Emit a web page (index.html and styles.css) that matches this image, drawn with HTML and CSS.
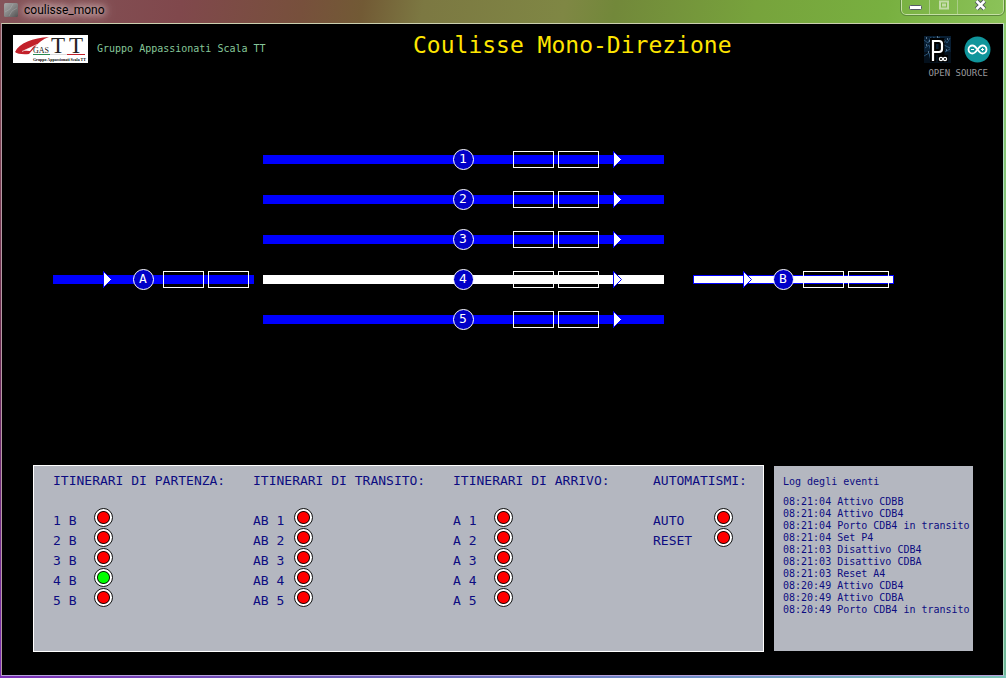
FILE: index.html
```
<!DOCTYPE html>
<html lang="it">
<head>
<meta charset="utf-8">
<title>coulisse_mono</title>
<link rel="stylesheet" href="styles.css">
</head>
<body>
<div class="window">
  <div class="titlebar">
    <svg class="app-icon" viewBox="0 0 14 14" aria-hidden="true">
      <defs><linearGradient id="cube" x1="0" y1="0" x2="1" y2="1"><stop offset="0" stop-color="#a8a8a8"/><stop offset=".5" stop-color="#858585"/><stop offset="1" stop-color="#505050"/></linearGradient></defs>
      <rect width="14" height="14" rx="1.5" fill="url(#cube)"/>
      <path d="M1 9l5-3 3-5M5 13l3-5 5-3" stroke="#bbb" stroke-opacity=".35" fill="none"/>
    </svg>
    <span class="window-name">coulisse_mono</span>
    <div class="window-buttons">
      <button class="win-btn" type="button" aria-label="Riduci">
        <svg width="13" height="14" viewBox="0 0 13 14"><rect x="0.500" y="5.500" width="12" height="4" rx="1" fill="#fff" stroke="#555a66"/></svg>
      </button>
      <button class="win-btn" type="button" aria-label="Ingrandisci" disabled>
        <svg width="12" height="14" viewBox="0 0 12 14"><path d="M2 1.500h8v7h-8zM5 4.500h2v1h-2z" fill="none" stroke="#c3dba8" stroke-width="2"/></svg>
      </button>
      <button class="win-btn win-close" type="button" aria-label="Chiudi">
        <svg width="13" height="14" viewBox="0 0 13 14"><path d="M2.500 1L10.500 9M10.500 1L2.500 9" stroke="#4d525e" stroke-width="4.500"/><path d="M2.500 1L10.500 9M10.500 1L2.500 9" stroke="#fff" stroke-width="2.500"/></svg>
      </button>
    </div>
  </div>

  <main class="app">
    <header class="header">
      <div class="brand">
        <svg class="gas-logo" viewBox="0 0 75 28" role="img" aria-label="GAS TT">
          <rect width="75" height="28" fill="#fff"/>
          <path d="M2 17C6 8 20 3 36 2C30 4 25 8 22 12L16 19C10 19.500 4 19 2 17Z" fill="#c2202a"/>
          <path d="M11 15.500L21 11L17 16Z" fill="#fff"/>
          <path d="M9 16.500L24 9.500" stroke="#fff" stroke-width="0.700"/>
          <rect x="20" y="19" width="17" height="1" fill="#2a8a50"/>
          <rect x="37" y="19" width="17" height="1" fill="#ddd"/>
          <rect x="54" y="19" width="18" height="1" fill="#c2202a"/>
          <text class="logo-gas" x="20" y="18">GAS</text>
          <text class="logo-tt" x="38 56" y="18">TT</text>
          <text class="logo-sub" x="20" y="26">Gruppo Appassionati Scala TT</text>
        </svg>
        <span class="brand-name">Gruppo Appassionati Scala TT</span>
      </div>
      <h1 class="title">Coulisse Mono-Direzione</h1>
      <div class="credits">
        <div class="credit-logos">
          <svg width="27" height="27" viewBox="0 0 27 27" role="img" aria-label="Processing">
            <rect width="27" height="27" fill="#04101c"/>
            <rect width="27" height="16" fill="#081e33"/>
            <path d="M0 4l4 3 3-6M1 12l4-3 2 6M0 20l5-3 2 8M20 3l3 4 3-5M20 9l6 3M21 16l5-3M9 1l3 2 4-2" stroke="#2a5274" fill="none"/>
            <path d="M2 2h1M5 5h1M23 3h1M20 6h1M2 9h1M4 16h1M22 14h1M13 1h1" stroke="#a7c4dd"/>
            <path d="M9 26V5H17.500V16H10" stroke="#000" stroke-width="6" fill="none"/>
            <path d="M9 25V5H15Q18 5 18 8V13Q18 16 15 16H10" stroke="#fff" stroke-width="2.200" fill="none"/>
            <rect x="14" y="19" width="10" height="7" fill="#000"/>
            <circle cx="17" cy="23" r="1.600" stroke="#fff" stroke-width="1.200" fill="none"/><circle cx="21" cy="23" r="1.600" stroke="#fff" stroke-width="1.200" fill="none"/>
          </svg>
          <svg width="27" height="27" viewBox="0 0 27 27" role="img" aria-label="Arduino">
            <circle cx="13.500" cy="13.500" r="13" fill="#10959b"/>
            <path d="M13.500 13.500C11 10 10 9.500 8.500 9.500a4 4 0 0 0 0 8C10 17.500 11 17 13.500 13.500C16 10 17 9.500 18.500 9.500a4 4 0 0 1 0 8C17 17.500 16 17 13.500 13.500Z" fill="none" stroke="#fff" stroke-width="1.800"/>
            <path d="M7 13.500h3M17 13.500h3M18.500 12v3" stroke="#fff"/>
          </svg>
        </div>
        <span class="credit-text">OPEN SOURCE</span>
      </div>
    </header>

    <svg class="diagram" viewBox="3 140 1000 190" role="img" aria-label="Schema dei binari">
      <defs>
        <g id="cars"><rect x="0.500" y="-8" width="40" height="16"/><rect x="45.500" y="-8" width="40" height="16"/></g>
        <path id="arrow" d="M0.500 -8L8.500 0L0.500 8Z"/>
      </defs>
      <g class="track"><rect x="263" y="155" width="401" height="9"/><use href="#cars" class="cars" x="513" y="159.500"/><use href="#arrow" class="arrow" x="613" y="159.500"/><circle cx="463.500" cy="159.500" r="10"/><text x="463" y="163">1</text></g>
      <g class="track"><rect x="263" y="195" width="401" height="9"/><use href="#cars" class="cars" x="513" y="199.500"/><use href="#arrow" class="arrow" x="613" y="199.500"/><circle cx="463.500" cy="199.500" r="10"/><text x="463" y="203">2</text></g>
      <g class="track"><rect x="263" y="235" width="401" height="9"/><use href="#cars" class="cars" x="513" y="239.500"/><use href="#arrow" class="arrow" x="613" y="239.500"/><circle cx="463.500" cy="239.500" r="10"/><text x="463" y="243">3</text></g>
      <g class="track active"><rect x="263" y="275" width="401" height="9"/><use href="#cars" class="cars" x="513" y="279.500"/><use href="#arrow" class="arrow" x="613" y="279.500"/><circle cx="463.500" cy="279.500" r="10"/><text x="463" y="283">4</text></g>
      <g class="track"><rect x="263" y="315" width="401" height="9"/><use href="#cars" class="cars" x="513" y="319.500"/><use href="#arrow" class="arrow" x="613" y="319.500"/><circle cx="463.500" cy="319.500" r="10"/><text x="463" y="323">5</text></g>
      <g class="track"><rect x="53" y="275" width="201" height="9"/><use href="#cars" class="cars" x="163" y="279.500"/><use href="#arrow" class="arrow" x="103" y="279.500"/><circle cx="143.500" cy="279.500" r="10"/><text x="143" y="283">A</text></g>
      <g class="track active outlined"><rect x="693.500" y="275.500" width="200" height="8"/><use href="#cars" class="cars" x="803" y="279.500"/><use href="#arrow" class="arrow" x="743" y="279.500"/><circle cx="783.500" cy="279.500" r="10"/><text x="783" y="283">B</text></g>
    </svg>

    <div class="panels">
      <div class="controls">
        <section>
          <h2>ITINERARI DI PARTENZA:</h2>
          <div class="row"><label for="p1">1 B</label><button type="button" class="led" id="p1"></button></div>
          <div class="row"><label for="p2">2 B</label><button type="button" class="led" id="p2"></button></div>
          <div class="row"><label for="p3">3 B</label><button type="button" class="led" id="p3"></button></div>
          <div class="row"><label for="p4">4 B</label><button type="button" class="led on" id="p4"></button></div>
          <div class="row"><label for="p5">5 B</label><button type="button" class="led" id="p5"></button></div>
        </section>
        <section>
          <h2>ITINERARI DI TRANSITO:</h2>
          <div class="row"><label for="t1">AB 1</label><button type="button" class="led" id="t1"></button></div>
          <div class="row"><label for="t2">AB 2</label><button type="button" class="led" id="t2"></button></div>
          <div class="row"><label for="t3">AB 3</label><button type="button" class="led" id="t3"></button></div>
          <div class="row"><label for="t4">AB 4</label><button type="button" class="led" id="t4"></button></div>
          <div class="row"><label for="t5">AB 5</label><button type="button" class="led" id="t5"></button></div>
        </section>
        <section>
          <h2>ITINERARI DI ARRIVO:</h2>
          <div class="row"><label for="a1">A 1</label><button type="button" class="led" id="a1"></button></div>
          <div class="row"><label for="a2">A 2</label><button type="button" class="led" id="a2"></button></div>
          <div class="row"><label for="a3">A 3</label><button type="button" class="led" id="a3"></button></div>
          <div class="row"><label for="a4">A 4</label><button type="button" class="led" id="a4"></button></div>
          <div class="row"><label for="a5">A 5</label><button type="button" class="led" id="a5"></button></div>
        </section>
        <section class="auto">
          <h2>AUTOMATISMI:</h2>
          <div class="row"><label for="auto">AUTO</label><button type="button" class="led" id="auto"></button></div>
          <div class="row"><label for="reset">RESET</label><button type="button" class="led" id="reset"></button></div>
        </section>
      </div>
      <section class="log">
        <h2>Log degli eventi</h2>
        <ul>
          <li>08:21:04 Attivo CDBB</li>
          <li>08:21:04 Attivo CDB4</li>
          <li>08:21:04 Porto CDB4 in transito</li>
          <li>08:21:04 Set P4</li>
          <li>08:21:03 Disattivo CDB4</li>
          <li>08:21:03 Disattivo CDBA</li>
          <li>08:21:03 Reset A4</li>
          <li>08:20:49 Attivo CDB4</li>
          <li>08:20:49 Attivo CDBA</li>
          <li>08:20:49 Porto CDB4 in transito</li>
        </ul>
      </section>
    </div>
  </main>
</div>
</body>
</html>
```

FILE: styles.css
```
* { box-sizing: border-box; }
body {
  margin: 0;
  font-family: "DejaVu Sans Mono", "Liberation Mono", monospace;
}
h1, h2, ul { margin: 0; padding: 0; font-weight: 400; }
ul { list-style: none; }

.window {
  display: flex;
  flex-direction: column;
  min-height: 100vh;
  padding: 0 2px 2px 1px;
  background:
    linear-gradient(90deg, #7b2fb5, #6a55b5 30%, #6f8fc8 70%, #7cc4b8) bottom / 100% 3px no-repeat,
    linear-gradient(#8cc96a, #6fb79a) right / 3px 100% no-repeat,
    linear-gradient(#8a5258, #6a2a50 50%, #7b2fb5) left / 3px 100% no-repeat,
    #000;
}

.titlebar {
  display: flex;
  align-items: flex-start;
  height: 23px;
  margin: 0 -2px 0 -1px;
  padding: 0 2px 0 4px;
  background: linear-gradient(100deg, #85545a 0%, #80484c 18%, #77503c 30%, #725a35 36%, #7c7842 42%, #7f8744 56%, #72883a 61%, #77a33c 75%, #78b040 88%, #8cc35a 100%);
}
.app-icon { width: 14px; height: 14px; margin: 3px 6px 0 0; }
.window-name {
  font: 12px/20px Roboto, "Open Sans", sans-serif;
  color: #000;
  text-shadow: 0 0 6px #e6d2d2, 0 0 10px #e6d2d2, 0 0 14px #d8bcbc;
}
.window-buttons {
  display: flex;
  margin-left: auto;
  border: 1px solid #c5e0a4;
  border-top: 0;
  border-radius: 0 0 5px 5px;
  outline: 1px solid #5d8a3c;
}
.win-btn {
  display: flex;
  justify-content: center;
  width: 28px;
  height: 14px;
  padding: 0;
  border: 0;
  border-right: 1px solid #a9cd86;
  background: none;
}
.win-close { width: 45px; border-right: 0; }

.app {
  display: flex;
  flex-direction: column;
  flex: 1;
  padding: 1px 0 0 1px;
  border: 1px solid;
  border-color: #cbd0b0 #b4dcc8 #b9a4dc #b59aa4;
  background: #000;
}

.header {
  display: grid;
  grid-template-columns: 400px 1fr auto;
  padding: 10px 12px 0 10px;
}
.brand { display: flex; align-items: flex-start; gap: 9px; }
.gas-logo { width: 75px; height: 28px; overflow: visible; }
.brand-name { font-size: 10px; line-height: 28px; color: #86c79a; }
.logo-gas { font: 8px "Liberation Serif", serif; fill: #222; }
.logo-tt { font: 23px "Liberation Serif", serif; fill: #222; }
.logo-sub { font: bold 4px "Liberation Serif", serif; fill: #000; }
.title { font-size: 23px; line-height: 20px; color: #ffe600; white-space: nowrap; }
.credits { display: flex; flex-direction: column; align-items: flex-end; gap: 4px; }
.credit-logos { display: flex; gap: 13px; padding-top: 1px; }
.credit-text { padding-right: 3px; font-size: 9px; line-height: 12px; color: #98989c; }

.diagram { display: block; width: 100%; margin-top: 61px; }
.track rect { fill: #00f; }
.track.active rect { fill: #fff; }
.track.outlined > rect { stroke: #00f; }
.track .cars, .cars rect { fill: none; stroke: #fff; }
#cars rect { fill: none; }
.track .arrow { fill: #fff; stroke: #00f; }
.track circle { fill: #0000c8; stroke: #fff; }
.track text { font-size: 13px; fill: #fff; text-anchor: middle; }

.panels {
  display: grid;
  grid-template-columns: 731fr 199fr;
  gap: 10px;
  margin: auto 30px 23px;
  color: #0c0c80;
}
.controls {
  display: grid;
  grid-template-columns: 20fr 20fr 20fr 11fr;
  padding: 5px 0 43px 19px;
  border: 1px solid #fff;
  background: #b4b7c0;
  font-size: 13px;
  white-space: nowrap;
}
.controls h2 { margin-bottom: 17px; font-size: 13px; line-height: 20px; }
.row { display: flex; align-items: flex-start; height: 20px; }
.row label { width: 41px; padding-top: 5px; line-height: 15px; }
.auto .row label { width: 61px; }
.led {
  width: 19px;
  height: 19px;
  padding: 0;
  border: 1px solid #111;
  border-radius: 50%;
  background: radial-gradient(circle, #f00 5px, #200 6px, #200 6px, #fff 7px);
}
.led.on { background: radial-gradient(circle, #0f0 5px, #020 6px, #020 6px, #fff 7px); }

.log {
  margin: 1px 0;
  padding: 10px 0 10px 9px;
  background: #b4b7c0;
  font-size: 10px;
  line-height: 12px;
  white-space: nowrap;
}
.log h2 { margin-bottom: 8px; font-size: 10px; line-height: 12px; }
```
